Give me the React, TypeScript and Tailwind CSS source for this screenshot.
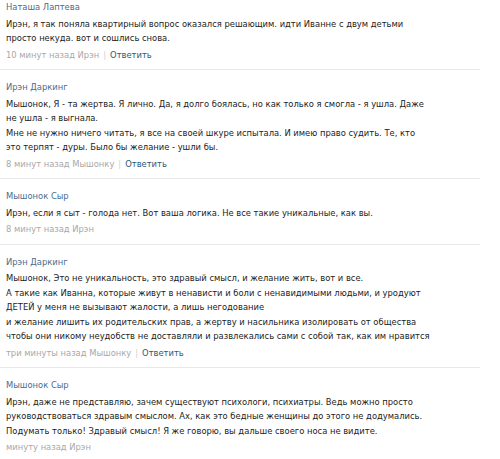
import React from "react";

type C = { name: string; lines: string[]; ts: string; reply: boolean };

const comments: C[] = [
  {
    name: "Наташа Лаптева",
    lines: [
      "Ирэн, я так поняла квартирный вопрос оказался решающим. идти Иванне с двум детьми",
      "просто некуда. вот и сошлись снова.",
    ],
    ts: "10 минут назад Ирэн",
    reply: true,
  },
  {
    name: "Ирэн Даркинг",
    lines: [
      "Мышонок, Я - та жертва. Я лично. Да, я долго боялась, но как только я смогла - я ушла. Даже",
      "не ушла - я выгнала.",
      "Мне не нужно ничего читать, я все на своей шкуре испытала. И имею право судить. Те, кто",
      "это терпят - дуры. Было бы желание - ушли бы.",
    ],
    ts: "8 минут назад Мышонку",
    reply: true,
  },
  {
    name: "Мышонок Сыр",
    lines: ["Ирэн, если я сыт - голода нет. Вот ваша логика. Не все такие уникальные, как вы."],
    ts: "8 минут назад Ирэн",
    reply: false,
  },
  {
    name: "Ирэн Даркинг",
    lines: [
      "Мышонок, Это не уникальность, это здравый смысл, и желание жить, вот и все.",
      "А такие как Иванна, которые живут в ненависти и боли с ненавидимыми людьми, и уродуют",
      "ДЕТЕЙ у меня не вызывают жалости, а лишь негодование",
      "и желание лишить их родительских прав, а жертву и насильника изолировать от общества",
      "чтобы они никому неудобств не доставляли и развлекались сами с собой так, как им нравится",
    ],
    ts: "три минуты назад Мышонку",
    reply: true,
  },
  {
    name: "Мышонок Сыр",
    lines: [
      "Ирэн, даже не представляю, зачем существуют психологи, психиатры. Ведь можно просто",
      "руководствоваться здравым смыслом. Ах, как это бедные женщины до этого не додумались.",
      "Подумать только! Здравый смысл! Я же говорю, вы дальше своего носа не видите.",
    ],
    ts: "минуту назад Ирэн",
    reply: false,
  },
];

export default function App() {
  return (
    <div
      className="w-[500px] h-[459px] overflow-hidden bg-white text-[9.3px] leading-[14.5px]"
      style={{ fontFamily: '"DejaVu Sans Condensed", Tahoma, "DejaVu Sans", sans-serif' }}
    >
      {comments.map((c, i) => (
        <div
          key={i}
          className={`w-[480px] border-b border-[#e9e9e9] pl-[6px] pb-[7px] ${i === 0 ? "pt-0" : "pt-[10px]"}`}
        >
          <div className="text-[#4a6b8d] whitespace-nowrap">{c.name}</div>
          <div className="mt-[2px] text-[#222222]">
            {c.lines.map((l, j) => (
              <div key={j} className="whitespace-nowrap">
                {l}
              </div>
            ))}
          </div>
          <div className="mt-[2px] flex items-center whitespace-nowrap text-[#a8a8a8]">
            <span>{c.ts}</span>
            {c.reply && (
              <>
                <span className="mx-[4px] text-[#d0d0d0]">|</span>
                <span className="text-[#2b587a]">Ответить</span>
              </>
            )}
          </div>
        </div>
      ))}
    </div>
  );
}
